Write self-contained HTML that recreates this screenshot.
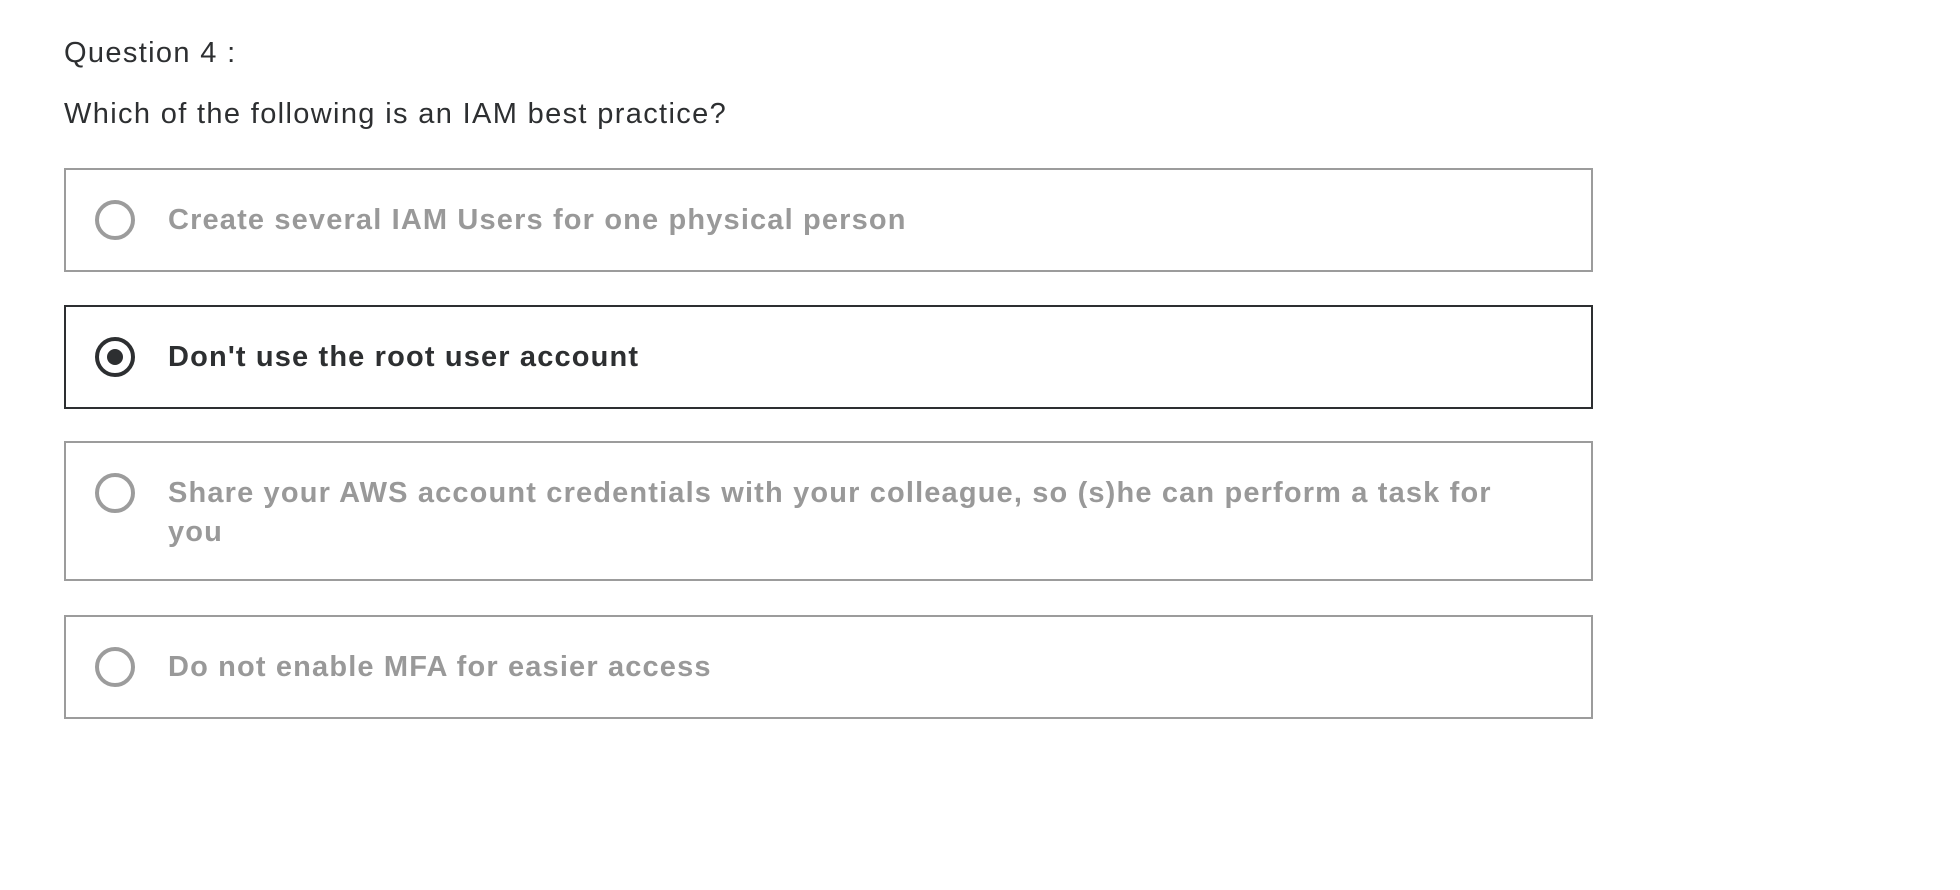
<!DOCTYPE html>
<html><head><meta charset="utf-8"><style>
html,body{margin:0;padding:0;background:#fff;width:1960px;height:890px;overflow:hidden;font-family:"Liberation Sans",sans-serif;}
.t{position:absolute;left:64px;color:#2d2f31;font-size:29px;line-height:36px;white-space:nowrap;letter-spacing:1.35px;}
.box{position:absolute;left:64px;width:1529px;box-sizing:border-box;border:2px solid #9c9c9c;}
.box.sel{border-color:#2d2f31;}
.r{position:absolute;left:29px;width:40px;height:40px;box-sizing:border-box;border:4px solid #9c9c9c;border-radius:50%;}
.sel .r{border-color:#2d2f31;}
.sel .r::after{content:"";position:absolute;left:8px;top:8px;width:16px;height:16px;border-radius:50%;background:#2d2f31;}
.lab{position:absolute;left:102px;font-weight:bold;font-size:29px;line-height:39px;color:#999;letter-spacing:1.15px;white-space:nowrap;}
.sel .lab{color:#2d2f31;}
</style></head><body>
<div class="t" style="top:35px">Question 4 :</div>
<div class="t" style="top:96px">Which of the following is an IAM best practice?</div>

<div class="box" style="top:168px;height:104px"><div class="r" style="top:30px"></div><div class="lab" style="top:31px">Create several IAM Users for one physical person</div></div>
<div class="box sel" style="top:305px;height:104px"><div class="r" style="top:30px"></div><div class="lab" style="top:31px">Don't use the root user account</div></div>
<div class="box" style="top:441px;height:140px"><div class="r" style="top:30px"></div><div class="lab" style="top:31px">Share your AWS account credentials with your colleague, so (s)he can perform a task for<br>you</div></div>
<div class="box" style="top:615px;height:104px"><div class="r" style="top:30px"></div><div class="lab" style="top:31px">Do not enable MFA for easier access</div></div>
</body></html>
